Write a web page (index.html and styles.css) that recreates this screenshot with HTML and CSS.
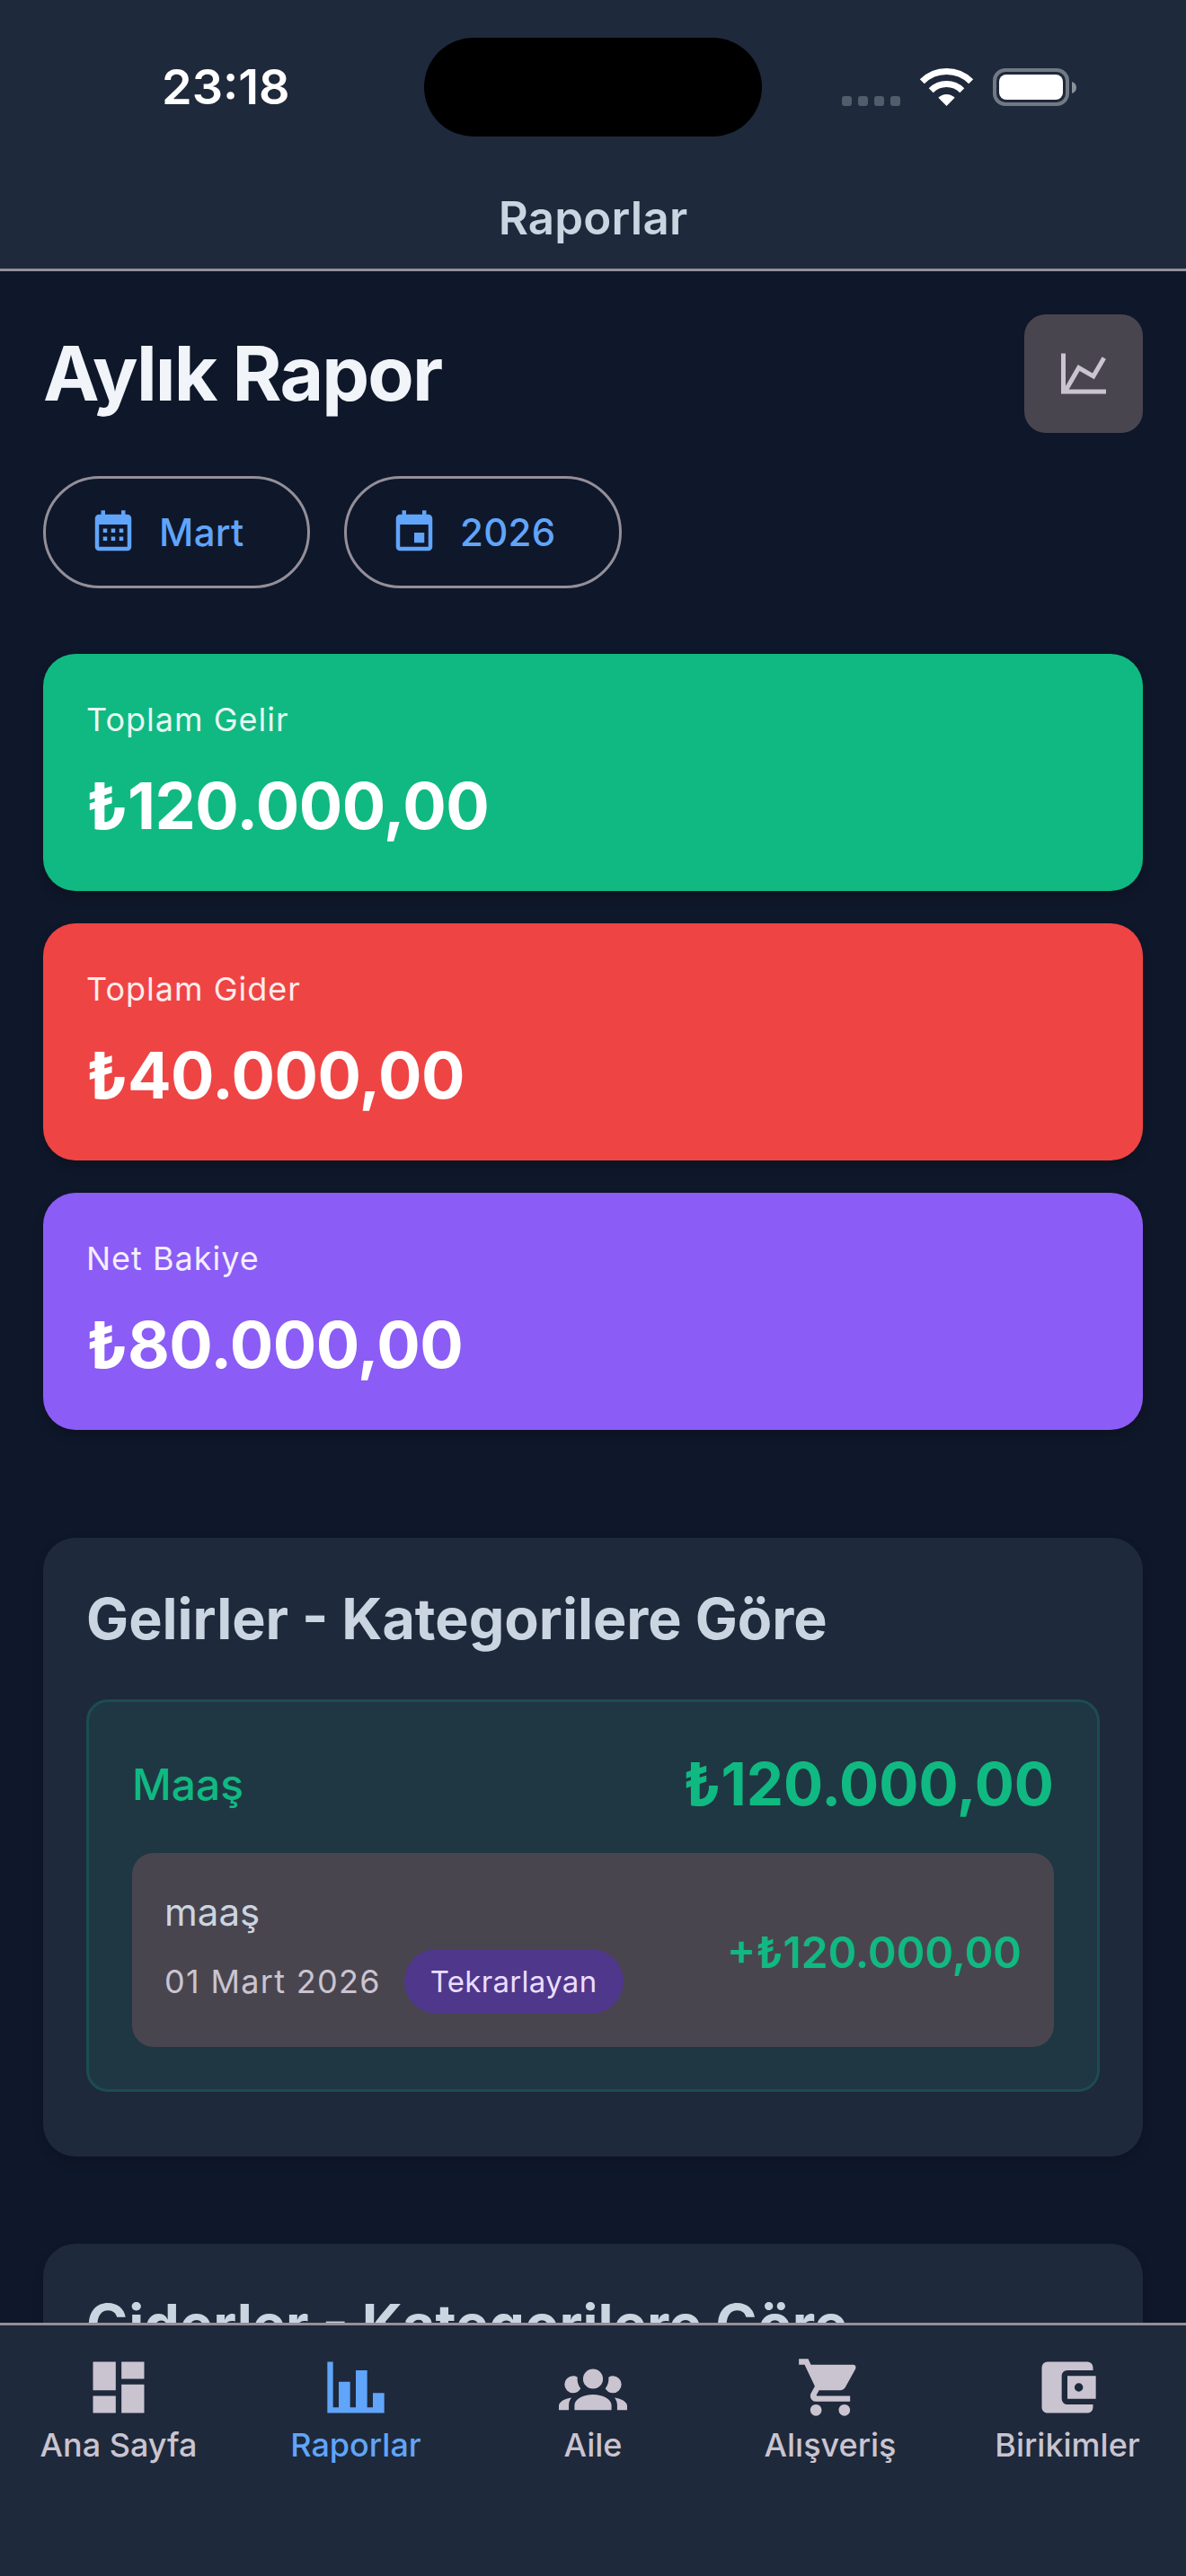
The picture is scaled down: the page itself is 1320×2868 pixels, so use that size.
FILE: index.html
```html
<!DOCTYPE html>
<html lang="tr">
<head>
<meta charset="utf-8">
<title>Raporlar</title>
<link rel="stylesheet" href="styles.css">
</head>
<body>
<div class="page">
  <header class="header">
    <div class="status">
      <span class="time">23:18</span>
      <span class="island"></span>
      <svg class="status-icons" viewBox="0 0 261 42" width="261" height="42">
        <g class="dots"><rect x="0" y="31" width="11" height="11" rx="3"/><rect x="18" y="31" width="11" height="11" rx="3"/><rect x="36" y="31" width="11" height="11" rx="3"/><rect x="54" y="31" width="11" height="11" rx="3"/></g>
        <g class="wifi"><path d="M89.3 14.8A38.5 38.5 0 0 1 143.7 14.8"/><path d="M99.2 24.7A24.5 24.5 0 0 1 133.8 24.7"/></g>
        <path class="white" d="M116.5 42L107.3 32.8A13 13 0 0 1 125.7 32.8Z"/>
        <rect class="batt" x="170" y="2" width="81" height="38" rx="12"/>
        <rect class="white" x="175" y="7" width="71" height="28" rx="8"/>
        <path class="cap" d="M256 15C259 16 261 18 261 21.500C261 25 259 27 256 28Z"/>
      </svg>
    </div>
    <div class="header-title">Raporlar</div>
  </header>

  <main class="main">
    <div class="title-row">
      <h1 class="title">Aylık Rapor</h1>
      <button class="chart-btn"><svg class="ico-60" viewBox="0 0 24 24"><path d="M16,11.78L20.24,4.45L21.97,5.45L16.74,14.5L10.23,10.75L5.46,19H22V21H2V3H4V17.54L9.5,8L16,11.78Z"/></svg></button>
    </div>
    <div class="chips">
      <div class="chip chip-month"><svg class="ico-54" viewBox="0 0 24 24"><path d="M9,10V12H7V10H9M13,10V12H11V10H13M17,10V12H15V10H17M19,3A2,2 0 0,1 21,5V19A2,2 0 0,1 19,21H5C3.89,21 3,20.1 3,19V5A2,2 0 0,1 5,3H6V1H8V3H16V1H18V3H19M19,19V8H5V19H19M9,14V16H7V14H9M13,14V16H11V14H13M17,14V16H15V14H17Z"/></svg><span>Mart</span></div>
      <div class="chip chip-year"><svg class="ico-54" viewBox="0 0 24 24"><path d="M19,19H5V8H19M16,1V3H8V1H6V3H5C3.89,3 3,3.89 3,5V19A2,2 0 0,0 5,21H19A2,2 0 0,0 21,19V5C21,3.89 20.1,3 19,3H18V1M17,12H12V17H17V12Z"/></svg><span>2026</span></div>
    </div>

    <div class="summary">
      <div class="sum-card green"><div class="sum-label">Toplam Gelir</div><div class="sum-value">₺120.000,00</div></div>
      <div class="sum-card red"><div class="sum-label">Toplam Gider</div><div class="sum-value">₺40.000,00</div></div>
      <div class="sum-card purple"><div class="sum-label">Net Bakiye</div><div class="sum-value">₺80.000,00</div></div>
    </div>

    <section class="section section-first">
      <h2 class="section-title">Gelirler - Kategorilere Göre</h2>
      <div class="cat">
        <div class="cat-head"><span class="cat-name">Maaş</span><span class="cat-total">₺120.000,00</span></div>
        <div class="item">
          <div class="item-left">
            <div class="item-name">maaş</div>
            <div class="item-meta"><span class="item-date">01 Mart 2026</span><span class="pill">Tekrarlayan</span></div>
          </div>
          <div class="item-amount">+₺120.000,00</div>
        </div>
      </div>
    </section>

    <section class="section">
      <h2 class="section-title">Giderler - Kategorilere Göre</h2>
    </section>
  </main>

  <nav class="nav">
    <div class="tab"><svg class="ico-76" viewBox="0 0 24 24"><path d="M13,3V9H21V3M13,21H21V11H13M3,21H11V15H3M3,13H11V3H3V13Z"/></svg><span>Ana Sayfa</span></div>
    <div class="tab active"><svg class="ico-76" viewBox="0 0 24 24"><path d="M22,21H2V3H4V19H6V10H10V19H12V6H16V19H18V14H22V21Z"/></svg><span>Raporlar</span></div>
    <div class="tab"><svg class="ico-76" viewBox="0 0 24 24"><path d="M12,5.5A3.5,3.5 0 0,1 15.5,9A3.5,3.5 0 0,1 12,12.5A3.5,3.5 0 0,1 8.5,9A3.5,3.5 0 0,1 12,5.5M5,8C5.56,8 6.08,8.15 6.53,8.42C6.38,9.85 6.8,11.27 7.66,12.38C7.16,13.34 6.16,14 5,14A3,3 0 0,1 2,11A3,3 0 0,1 5,8M19,8A3,3 0 0,1 22,11A3,3 0 0,1 19,14C17.84,14 16.84,13.34 16.34,12.38C17.2,11.27 17.62,9.85 17.47,8.42C17.92,8.15 18.44,8 19,8M5.5,18.25C5.5,16.18 8.41,14.5 12,14.5C15.59,14.5 18.5,16.18 18.5,18.25V20H5.5V18.25M0,20V18.5C0,17.11 1.89,15.94 4.45,15.6C3.86,16.28 3.5,17.22 3.5,18.25V20H0M24,20H20.5V18.25C20.5,17.22 20.14,16.28 19.55,15.6C22.11,15.94 24,17.11 24,18.5V20Z"/></svg><span>Aile</span></div>
    <div class="tab"><svg class="ico-76" viewBox="0 0 24 24"><path d="M17,18C15.89,18 15,18.89 15,20A2,2 0 0,0 17,22A2,2 0 0,0 19,20C19,18.89 18.1,18 17,18M1,2V4H3L6.6,11.59L5.24,14.04C5.09,14.32 5,14.65 5,15A2,2 0 0,0 7,17H19V15H7.42A0.25,0.25 0 0,1 7.17,14.75C7.17,14.7 7.18,14.66 7.2,14.63L8.1,13H15.55C16.3,13 16.96,12.58 17.3,11.97L20.88,5.5C20.95,5.34 21,5.17 21,5A1,1 0 0,0 20,4H5.21L4.27,2M7,18C5.89,18 5,18.89 5,20A2,2 0 0,0 7,22A2,2 0 0,0 9,20C9,18.89 8.1,18 7,18Z"/></svg><span>Alışveriş</span></div>
    <div class="tab"><svg class="ico-76" viewBox="0 0 24 24"><path d="M21,18V19A2,2 0 0,1 19,21H5C3.89,21 3,20.1 3,19V5A2,2 0 0,1 5,3H19A2,2 0 0,1 21,5V6H12C10.89,6 10,6.9 10,8V16A2,2 0 0,0 12,18M12,16H22V8H12M16,13.5A1.5,1.5 0 0,1 14.5,12A1.5,1.5 0 0,1 16,10.5A1.5,1.5 0 0,1 17.5,12A1.5,1.5 0 0,1 16,13.5Z"/></svg><span>Birikimler</span></div>
  </nav>
</div>
</body>
</html>
```
FILE: styles.css
```css
* { box-sizing: border-box; }
html, body { margin: 0; padding: 0; background: #0f172a; }
body { font-family: Inter, "Noto Sans", sans-serif; }
.page { width: 1320px; height: 2868px; display: flex; flex-direction: column; overflow: hidden; background: #0f172a; }

.header { height: 302px; flex: none; background: #1e293b; border-bottom: 3px solid #938f99; padding-top: 42px; }
.status { height: 110px; display: grid; grid-template-columns: 472px 376px 1fr; align-items: center; }
.time { padding-left: 180px; color: #fff; font-size: 54px; font-weight: 600; line-height: 60px; }
.island { height: 110px; background: #000; border-radius: 55px; }
.status-icons { margin-left: 89px; display: block; }
.dots rect { fill: #525c6b; }
.wifi path { fill: none; stroke: #fff; stroke-width: 7; }
.white { fill: #fff; }
.batt { fill: none; stroke: #727985; stroke-width: 4; }
.cap { fill: #8a909a; }
.header-title { margin-top: 61px; text-align: center; color: #cbd5e1; font-size: 51px; font-weight: 600; line-height: 60px; letter-spacing: .2px; }

.main { flex: 1; min-height: 0; overflow: hidden; padding: 48px 48px 0; }
.title-row { display: flex; align-items: center; justify-content: space-between; height: 132px; }
.title { margin: 0; color: #f1f5f9; font-size: 84px; font-weight: 700; line-height: 100px; letter-spacing: -1.9px; }
.chart-btn { width: 132px; height: 132px; padding: 0; border: 0; border-radius: 24px; background: #49454f; display: flex; align-items: center; justify-content: center; }
.ico-60 { width: 60px; height: 60px; fill: #cac4d0; }

.chips { display: flex; gap: 38px; margin-top: 48px; }
.chip { height: 125px; border: 3px solid #938f99; border-radius: 63px; display: flex; align-items: center; color: #60a5fa; font-size: 42px; font-weight: 500; letter-spacing: .3px; }
.chip-month { width: 297px; padding-left: 48px; }
.chip-year { width: 309px; padding-left: 48px; }
.chip span { margin-left: 24px; }
.ico-54 { width: 54px; height: 54px; fill: #60a5fa; flex: none; }

.summary { display: flex; flex-direction: column; gap: 36px; margin-top: 73px; }
.sum-card { height: 264px; border-radius: 36px; padding: 51px 48px 0; color: #fff; box-shadow: 0 6px 12px rgba(0,0,0,.2); }
.green { background: #10b981; }
.red { background: #ef4444; }
.purple { background: #8b5cf6; }
.sum-label { font-size: 36px; line-height: 44px; letter-spacing: 1px; opacity: .9; }
.sum-value { margin-top: 30px; font-size: 72px; font-weight: 700; line-height: 88px; letter-spacing: -.5px; }

.section { background: #1e293b; border-radius: 36px; padding: 48px; box-shadow: 0 6px 12px rgba(0,0,0,.15); margin-top: 97px; min-height: 300px; }
.section-first { margin-top: 120px; }
.section-title { margin: 0; color: #cbd5e1; font-size: 62.800px; font-weight: 700; line-height: 84px; }
.cat { margin-top: 48px; margin-bottom: 24px; height: 437px; padding: 47px 48px 0 48px; background: #1f3743; border: 3px solid #1c4d4f; border-radius: 24px; }
.cat-head { display: flex; justify-content: space-between; align-items: center; height: 88px; }
.cat-name { color: #10b981; font-size: 48px; font-weight: 500; }
.cat-total { color: #10b981; font-size: 65.500px; font-weight: 700; }
.item { margin-top: 33px; height: 216px; background: #49454f; border-radius: 24px; padding: 4px 36px 0; display: flex; align-items: center; justify-content: space-between; }
.item-name { color: #cbd5e1; font-size: 42px; line-height: 50px; }
.item-meta { display: flex; align-items: center; gap: 26px; margin-top: 16px; }
.item-date { color: #cac4d0; font-size: 36px; letter-spacing: 1.3px; }
.pill { height: 72px; padding: 0 29px; border-radius: 36px; background: #4f378b; color: #eaddff; font-size: 33px; font-weight: 400; line-height: 72px; letter-spacing: .3px; }
.item-amount { color: #10b981; font-size: 48px; font-weight: 600; }

.nav { height: 282px; flex: none; background: #1e293b; border-top: 3px solid #938f99; display: grid; grid-template-columns: repeat(5, 264px); position: relative; }
.tab { display: flex; flex-direction: column; align-items: center; padding-top: 31px; color: #cac4d0; font-size: 36px; font-weight: 500; line-height: 44px; }
.tab span { margin-top: 4px; }
.tab svg { fill: #cac4d0; }
.tab.active { color: #60a5fa; }
.tab.active svg { fill: #60a5fa; }
.ico-76 { width: 76px; height: 76px; flex: none; }
```
